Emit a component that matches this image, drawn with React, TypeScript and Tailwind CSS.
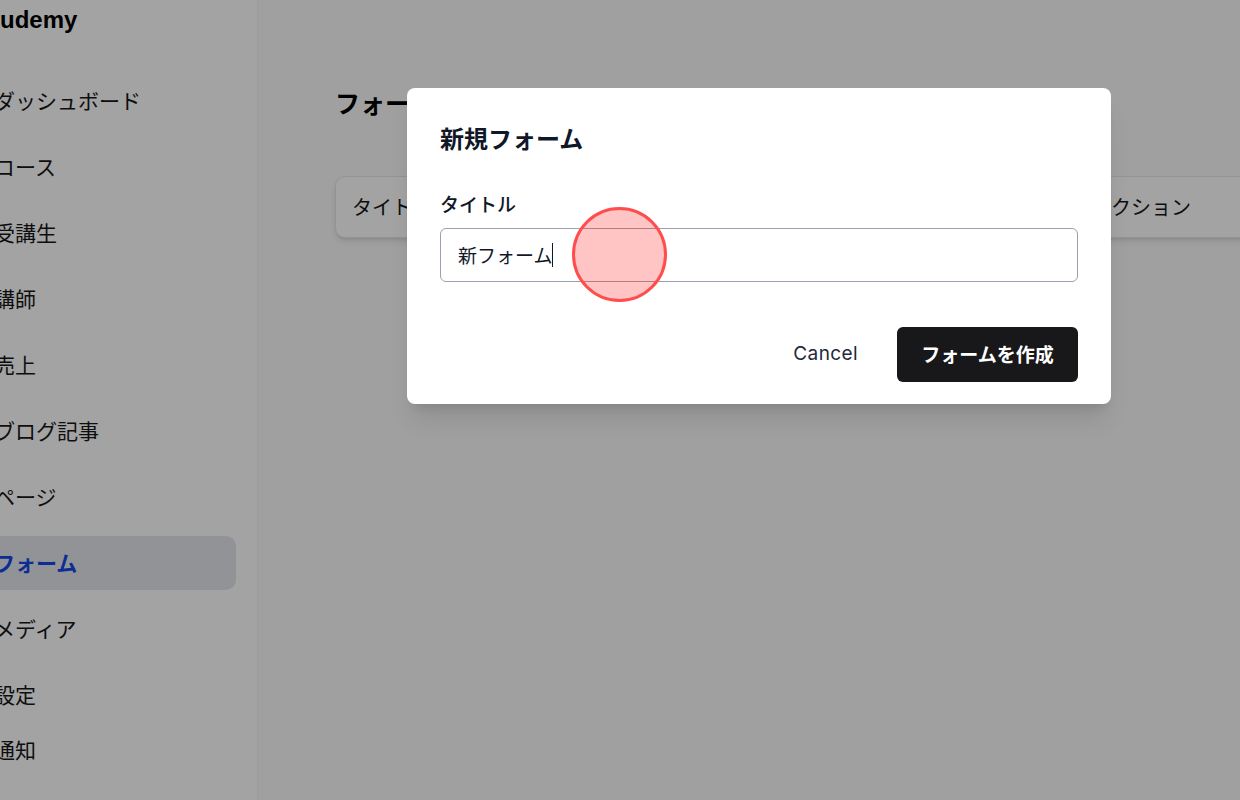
import React from "react";

const navItems = [
  "ダッシュボード",
  "コース",
  "受講生",
  "講師",
  "売上",
  "ブログ記事",
  "ページ",
  "フォーム",
  "メディア",
  "設定",
];

const jp = { fontFamily: '"Noto Sans CJK JP", "Noto Sans", sans-serif' };
const ui = { fontFamily: 'Inter, "Noto Sans CJK JP", sans-serif' };

function Sidebar() {
  return (
    <aside className="w-[258px] shrink-0 bg-white border-r border-gray-100 h-full overflow-hidden">
      <div className="-ml-[60px] w-[318px] pl-[16px] pr-[22px]" style={jp}>
        <div
          className="pt-[4px] pl-[20px] h-[36px] text-[24px] leading-[32px] font-bold text-black"
          style={{ fontFamily: '"Liberation Sans", Arial, sans-serif' }}
        >
          Studemy
        </div>
        <nav className="mt-[38px] flex flex-col gap-[12px]">
          {navItems.map((item) => {
            const active = item === "フォーム";
            return (
              <div
                key={item}
                className={
                  active
                    ? "h-[54px] flex items-center px-[38px] rounded-[10px] bg-gray-200 text-blue-700 font-bold text-[21px]"
                    : "h-[54px] flex items-center px-[38px] rounded-[10px] text-neutral-900 text-[21px]"
                }
              >
                {item}
              </div>
            );
          })}
          <div className="-mt-[11px] h-[54px] flex items-center px-[38px] text-neutral-900 text-[21px]">
            通知
          </div>
        </nav>
      </div>
    </aside>
  );
}

function Main() {
  return (
    <main className="flex-1 bg-[#fafafa] h-full overflow-hidden pl-[77px] pt-[82px]" style={jp}>
      <h1 className="text-[25px] leading-[40px] font-bold text-black">フォーム</h1>
      <div className="mt-[54px] w-[1000px] h-[62px] bg-white border border-gray-200 rounded-[10px] shadow-md flex items-center px-[16px] text-[20px] text-neutral-900">
        <div className="flex-1">タイトル</div>
        <div className="w-[226px]">アクション</div>
      </div>
    </main>
  );
}

function Modal() {
  return (
    <div className="absolute left-[407px] top-[88px] w-[704px] bg-white rounded-[8px] shadow-xl px-[33px] pt-[34px] pb-[22px]" style={ui}>
      <h2 className="text-[24px] leading-[32px] font-bold text-gray-900" style={jp}>
        新規フォーム
      </h2>
      <label className="block mt-[37px] text-[19px] leading-[26px] font-medium text-gray-900" style={jp}>
        タイトル
      </label>
      <div className="mt-[11px] h-[54px] border border-gray-400 rounded-[6px] flex items-center px-[17px] text-[19px] text-gray-900" style={jp}>
        <span>新フォーム</span>
        <span className="inline-block w-px h-[24px] bg-gray-900" />
      </div>
      <div className="mt-[45px] flex justify-end items-center gap-[17px]">
        <button className="h-[55px] px-[22px] rounded-[6px] text-[19px] tracking-[0.4px] text-gray-800">Cancel</button>
        <button className="h-[55px] w-[181px] rounded-[6px] bg-[#18181b] text-white text-[19px] font-bold" style={jp}>
          フォームを作成
        </button>
      </div>
    </div>
  );
}

export default function App() {
  return (
    <div className="relative w-[1240px] h-[800px] overflow-hidden flex">
      <Sidebar />
      <Main />
      <div className="absolute inset-0 bg-black/[0.36]" />
      <Modal />
      <div className="absolute left-[572px] top-[207px] w-[95px] h-[95px] rounded-full border-[3px] border-[#ff4d4d] bg-[#ff0000]/[0.23]" />
    </div>
  );
}
